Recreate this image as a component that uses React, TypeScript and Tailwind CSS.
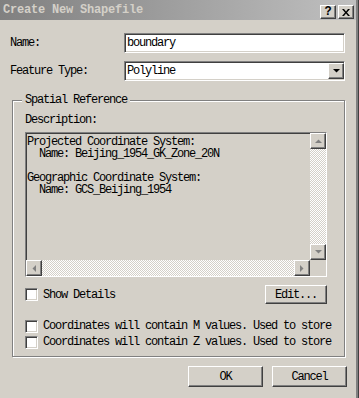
import React from "react";

const font = { fontFamily: '"Liberation Mono", "DejaVu Sans Mono", monospace' };

const sunken =
  "border border-t-[#808080] border-l-[#808080] border-r-white border-b-white shadow-[inset_1px_1px_0_#404040,inset_-1px_-1px_0_#d4d0c8]";
const raised =
  "border border-t-white border-l-white border-r-[#404040] border-b-[#404040] shadow-[inset_-1px_-1px_0_#808080]";
const track =
  "bg-[repeating-conic-gradient(#ffffff_0%_25%,#d4d0c8_0%_50%)] bg-[length:2px_2px]";

type Dir = "up" | "down" | "left" | "right";

const Arrow: React.FC<{ dir: Dir; color?: string }> = ({ dir, color = "#808080" }) => {
  const pts: Record<Dir, string> = {
    up: "0,4 7,4 3.5,0.5",
    down: "0,0 7,0 3.5,3.5",
    left: "4,0 4,7 0.5,3.5",
    right: "0,0 0,7 3.5,3.5",
  };
  const horiz = dir === "left" || dir === "right";
  return (
    <svg width={horiz ? 4 : 7} height={horiz ? 7 : 4} viewBox={horiz ? "0 0 4 7" : "0 0 7 4"}>
      <polygon points={pts[dir]} fill={color} />
    </svg>
  );
};

const ScrollBtn: React.FC<{ dir: Dir }> = ({ dir }) => (
  <div className={`flex h-[16px] w-[16px] shrink-0 items-center justify-center bg-[#d4d0c8] ${raised}`}>
    <Arrow dir={dir} />
  </div>
);

const Check: React.FC<{ label: string }> = ({ label }) => (
  <div className="flex h-[16px] items-center">
    <div className={`h-[13px] w-[13px] shrink-0 bg-white ${sunken}`} />
    <span className="ml-[5px] whitespace-pre text-[12px] tracking-[-1.2px]">{label}</span>
  </div>
);

const Button: React.FC<{ label: string; className: string }> = ({ label, className }) => (
  <div
    className={`flex items-center justify-center bg-[#d4d0c8] text-[12px] tracking-[-1.2px] ${raised} ${className}`}
  >
    {label}
  </div>
);

const description = `Projected Coordinate System:
  Name: Beijing_1954_GK_Zone_20N

Geographic Coordinate System:
  Name: GCS_Beijing_1954`;

export default function App() {
  return (
    <div
      className="flex h-[398px] w-[359px] flex-col overflow-hidden border-r border-[#404040] bg-[#d4d0c8] text-black shadow-[inset_-2px_0_0_#808080,inset_-3px_0_0_#d4d0c8]"
      style={font}
    >
      {/* title bar */}
      <div className="mr-[2px] flex h-[20px] shrink-0 bg-gradient-to-r from-[#808080] to-[#c0c0c0] pl-[3px]">
        <span className="flex-1 text-[12px] font-bold leading-[20px] tracking-[-0.2px] text-[#d4d0c8]">
          Create New Shapefile
        </span>
        <div className="flex gap-[2px] pr-[2px] pt-[5px]">
          <div className={`flex h-[14px] w-[16px] items-center justify-center bg-[#d4d0c8] text-[12px] font-bold leading-none ${raised}`}>
            ?
          </div>
          <div className={`flex h-[14px] w-[16px] items-center justify-center bg-[#d4d0c8] ${raised}`}>
            <svg width="8" height="7" viewBox="0 0 8 7">
              <path d="M0 0h2l2 2.5L6 0h2L5 3.5 8 7H6L4 4.5 2 7H0l3-3.5z" fill="#000" />
            </svg>
          </div>
        </div>
      </div>

      <div className="flex flex-col pl-[10px] pr-[11px]">
        {/* name */}
        <div className="mt-[13px] flex h-[20px] items-center">
          <span className="w-[114px] text-[12px] tracking-[-1.2px]">Name:</span>
          <div className={`flex h-[20px] w-[221px] items-center bg-white pl-[2px] text-[12px] tracking-[-1.2px] ${sunken}`}>
            boundary
          </div>
        </div>

        {/* feature type */}
        <div className="mt-[8px] flex h-[19px] items-center">
          <span className="w-[114px] text-[12px] tracking-[-1.2px]">Feature Type:</span>
          <div className={`flex h-[20px] w-[221px] items-center bg-white pl-[2px] text-[12px] tracking-[-1.2px] ${sunken}`}>
            <span className="flex-1">Polyline</span>
            <div className={`flex h-[16px] w-[16px] items-center justify-center bg-[#d4d0c8] ${raised}`}>
              <Arrow dir="down" color="#000" />
            </div>
          </div>
        </div>

        {/* spatial reference group */}
        <div className="relative ml-[2px] mt-[20px] h-[257px] w-[333px] border border-[#808080] shadow-[inset_1px_1px_0_#fff,1px_1px_0_#fff] pl-[12px] pt-[13px]">
          <span className="absolute -top-[7px] left-[9px] bg-[#d4d0c8] px-[3px] text-[12px] leading-[12px] tracking-[-1.2px]">
            Spatial Reference
          </span>
          <div className="text-[12px] leading-[12px] tracking-[-1.2px]">Description:</div>

          {/* description box */}
          <div className={`mt-[6px] flex h-[145px] w-[302px] flex-col bg-[#d4d0c8] ${sunken}`}>
            <div className="flex min-h-0 flex-1">
              <pre
                className="flex-1 overflow-hidden pl-[1px] pt-[3px] text-[12px] leading-[12px] tracking-[-1.2px]"
                style={font}
              >
                {description}
              </pre>
              <div className="flex w-[16px] flex-col">
                <ScrollBtn dir="up" />
                <div className={`flex-1 ${track}`} />
                <ScrollBtn dir="down" />
              </div>
            </div>
            <div className="flex h-[16px]">
              <ScrollBtn dir="left" />
              <div className={`flex-1 ${track}`} />
              <ScrollBtn dir="right" />
              <div className="w-[16px] bg-[#d4d0c8]" />
            </div>
          </div>

          {/* show details */}
          <div className="mt-[8px] flex h-[19px] w-[302px] items-center justify-between">
            <Check label="Show Details" />
            <Button label="Edit..." className="h-[19px] w-[62px]" />
          </div>

          <div className="mt-[14px] flex flex-col">
            <Check label="Coordinates will contain M values. Used to store" />
            <Check label="Coordinates will contain Z values. Used to store" />
          </div>
        </div>

        {/* buttons */}
        <div className="mt-[9px] flex justify-end gap-[9px]">
          <Button label="OK" className="h-[21px] w-[75px]" />
          <Button label="Cancel" className="h-[21px] w-[75px]" />
        </div>
      </div>
    </div>
  );
}
